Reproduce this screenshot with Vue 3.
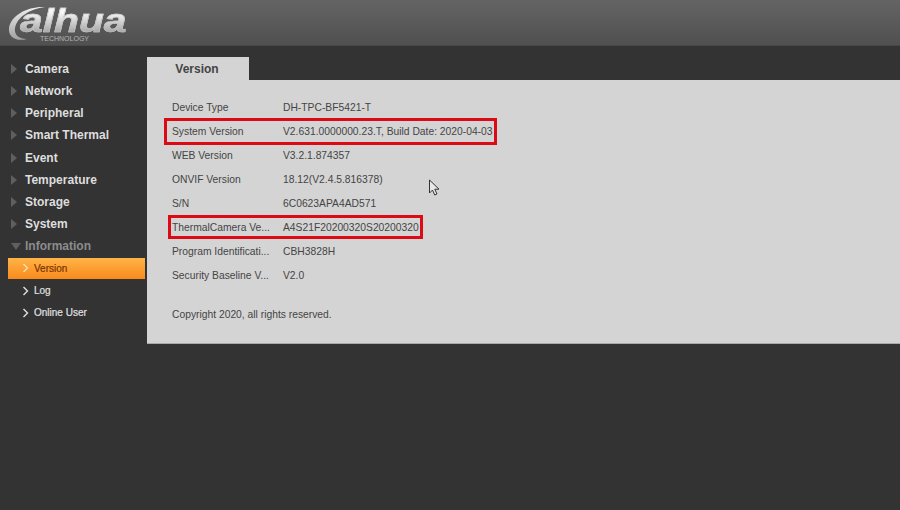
<script setup>
const menu = [
  { label: 'Camera' }, { label: 'Network' }, { label: 'Peripheral' }, { label: 'Smart Thermal' },
  { label: 'Event' }, { label: 'Temperature' }, { label: 'Storage' }, { label: 'System' }
]
const subs = [
  { label: 'Version', active: true }, { label: 'Log' }, { label: 'Online User' }
]
const rows = [
  { k: 'Device Type', v: 'DH-TPC-BF5421-T' },
  { k: 'System Version', v: 'V2.631.0000000.23.T, Build Date: 2020-04-03', mark: 'wide' },
  { k: 'WEB Version', v: 'V3.2.1.874357' },
  { k: 'ONVIF Version', v: '18.12(V2.4.5.816378)' },
  { k: 'S/N', v: '6C0623APA4AD571' },
  { k: 'ThermalCamera Ve...', v: 'A4S21F20200320S20200320', mark: 'narrow' },
  { k: 'Program Identificati...', v: 'CBH3828H' },
  { k: 'Security Baseline V...', v: 'V2.0' }
]
</script>

<template>
  <div class="page">
    <header class="top">
      <div class="logo">
        <svg class="swoosh" width="42" height="38" viewBox="0 0 42 38">
          <defs>
            <linearGradient id="sw" x1="0" y1="0" x2="0" y2="1">
              <stop offset="0" stop-color="#f0f0f0" />
              <stop offset="1" stop-color="#a0a0a0" />
            </linearGradient>
          </defs>
          <path d="M37 2C20 1 3 10 1 23c-1 9 7 14 18 11C11 34 6 30 7 23 9 12 22 4 37 2Z" fill="url(#sw)" />
        </svg>
        <span class="word">alhua</span>
        <span class="tech">TECHNOLOGY</span>
      </div>
    </header>
    <div class="main">
      <nav class="side">
        <div v-for="m in menu" :key="m.label" class="item">
          <i class="tri"></i><span>{{ m.label }}</span>
        </div>
        <div class="item open">
          <i class="tri down"></i><span>Information</span>
        </div>
        <div v-for="s in subs" :key="s.label" class="sub" :class="{ active: s.active }">
          <svg width="7" height="10" viewBox="0 0 7 10"><path d="M1.5 1l4 4-4 4" fill="none" stroke="currentColor" stroke-width="1.4" /></svg>
          <span>{{ s.label }}</span>
        </div>
      </nav>
      <section class="content">
        <div class="tab">Version</div>
        <div class="panel">
          <div class="table">
            <div v-for="r in rows" :key="r.k" class="row">
              <span class="key">{{ r.k }}</span>
              <span class="val">{{ r.v }}</span>
              <i v-if="r.mark" class="mark" :class="r.mark"></i>
            </div>
          </div>
          <p class="copy">Copyright 2020, all rights reserved.</p>
          <svg class="cursor" width="13" height="18" viewBox="0 0 13 18">
            <path d="M1.5 1v13l3-3 2.2 5 2.3-1-2.2-4.8h4.2Z" fill="#e8e8e8" stroke="#333" stroke-width="1" />
          </svg>
        </div>
      </section>
    </div>
  </div>
</template>

<style>
html, body { margin: 0; background: #333; }
</style>

<style scoped>
.page {
  width: 900px; height: 510px; overflow: hidden; display: flex; flex-direction: column;
  background: #333; font-family: "Liberation Sans", Arial, sans-serif;
}
.top {
  height: 46px; flex: none; box-sizing: border-box;
  background: linear-gradient(#646464, #505050); border-bottom: 1px solid #484848;
}
.logo { position: relative; width: 135px; height: 46px; }
.swoosh { position: absolute; left: 8px; top: 5px; }
.word {
  position: absolute; left: 20px; top: 5px; font-size: 34px; line-height: 30px; font-weight: 700; font-style: italic;
  letter-spacing: 0; color: transparent; transform: scaleX(1.2); transform-origin: left center;
  background: linear-gradient(#f6f6f6 25%, #a8a8a8 90%); -webkit-background-clip: text; background-clip: text;
  -webkit-text-stroke: 0.6px #c4c4c4;
}
.tech { position: absolute; left: 40px; top: 35px; font-size: 7px; line-height: 8px; color: #b4b4b4; letter-spacing: 0; }
.main { flex: 1; display: flex; min-height: 0; }
.side { width: 147px; flex: none; box-sizing: border-box; padding-top: 12px; }
.item {
  height: 22.15px; display: flex; align-items: center; gap: 8px; padding-left: 11px;
  font-size: 12px; font-weight: 700; color: #dedede;
}
.item.open { color: #8c8c8c; gap: 4px; margin-bottom: 0.4px; }
.tri {
  width: 0; height: 0; border-left: 6px solid #5f5f5f; border-top: 5px solid transparent; border-bottom: 5px solid transparent;
}
.tri.down {
  border-left: 5px solid transparent; border-right: 5px solid transparent; border-top: 7px solid #5f5f5f; border-bottom: 0;
}
.sub {
  height: 22px; margin: 0 2px 0 8px; display: flex; align-items: center; gap: 5px; padding-left: 14px;
  font-size: 10px; color: #e0e0e0; font-weight: 400; -webkit-text-stroke: 0.2px;
}
.sub.active {
  background: linear-gradient(#ffb347, #f98a1d); color: #7a3300; height: 21px; margin-bottom: 1px;
}
.sub.active svg { color: #fbe0b0; }
.content { flex: 1; padding-top: 11px; display: flex; flex-direction: column; align-items: flex-start; }
.tab {
  width: 102px; height: 23px; background: #d4d4d4; font-size: 12px; font-weight: 700; color: #444;
  display: flex; align-items: center; justify-content: center; box-sizing: border-box; padding-right: 2px;
}
.panel {
  position: relative; width: 753px; height: 264px; box-sizing: border-box; background: #d4d4d4;
  padding: 15px 0 0 25px; border-bottom: 1px solid #aaa;
}
.table { display: flex; flex-direction: column; }
.row { position: relative; height: 24px; display: flex; align-items: center; font-size: 10.3px; color: #444; }
.key { width: 111px; white-space: nowrap; }
.val { white-space: nowrap; }
.mark { position: absolute; box-sizing: border-box; border: 3px solid #dc0a14; }
.mark.wide { left: -8px; top: -1px; width: 333px; height: 27px; }
.mark.narrow { left: -4px; top: 0; width: 255px; height: 24px; }
.copy { margin: 22px 0 0; font-size: 10.3px; line-height: 12px; color: #444; }
.cursor { position: absolute; left: 281px; top: 99px; }
</style>
